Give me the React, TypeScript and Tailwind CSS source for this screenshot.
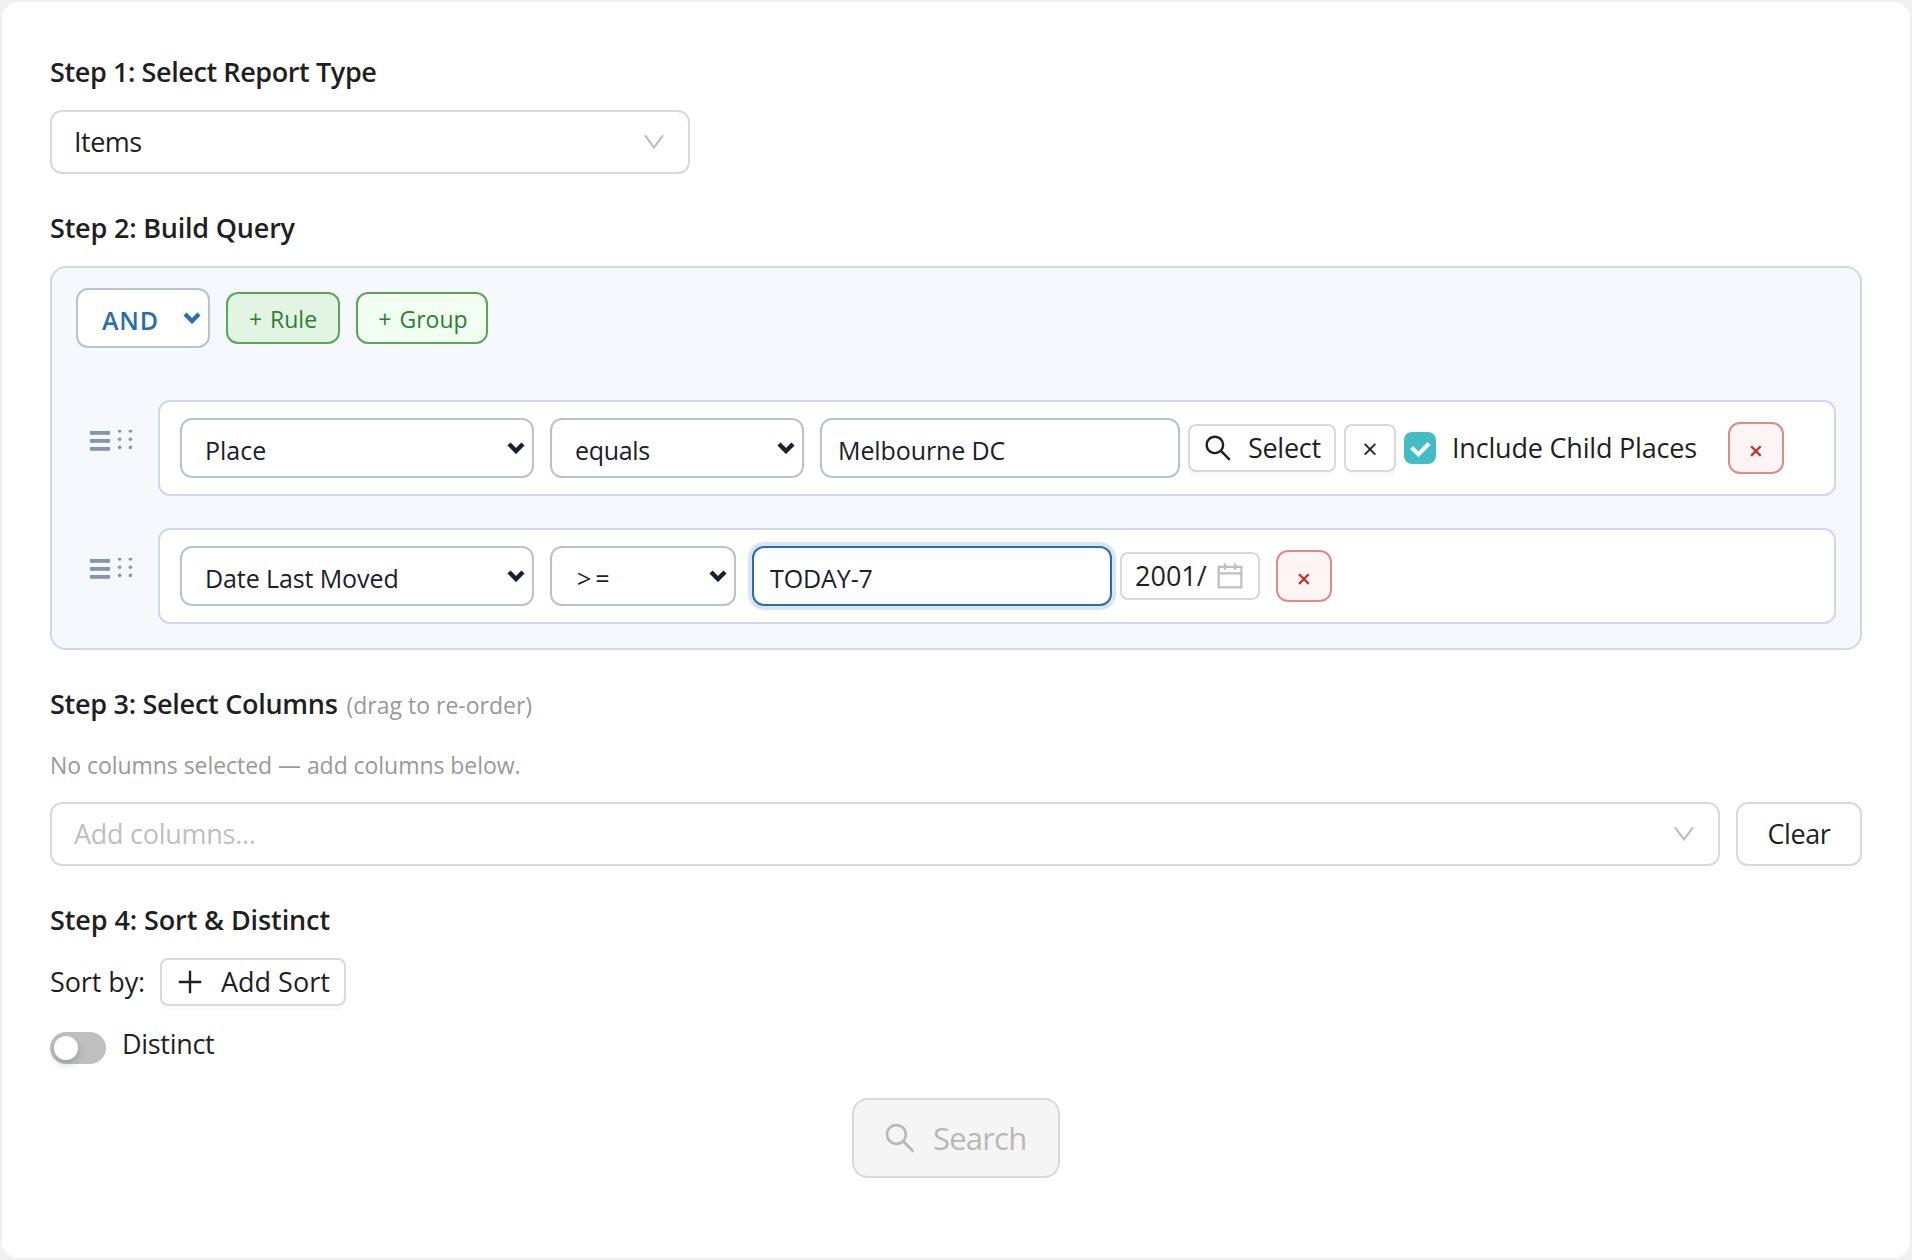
import type { ReactNode } from 'react';
import { AiOutlineCalendar, AiOutlineDown, AiOutlinePlus, AiOutlineSearch } from 'react-icons/ai';

const ICON_BOX = '64 64 896 896';

interface ChildrenProps {
  children: ReactNode;
  className?: string;
}

const StepTitle = ({ children, className = '' }: ChildrenProps) => (
  <h2 className={`text-[27px] leading-[44px] font-semibold text-[#1f1f1f] whitespace-nowrap ${className}`}>
    {children}
  </h2>
);

// Native looking select used by the query builder
const QuerySelect = ({ children, className = '' }: ChildrenProps) => (
  <div
    className={`flex h-[60px] shrink-0 items-center justify-between rounded-xl border-2 border-[#b8c2d0] bg-white pt-1.5 pr-[7px] pl-[23px] text-[25px] whitespace-nowrap ${className}`}
  >
    {children}
    <svg width="18" height="12" viewBox="0 0 18 12" fill="none" className="-mt-1.5">
      <path d="M2 2l7 7 7-7" stroke="currentColor" strokeWidth="4.4" />
    </svg>
  </div>
);

const QueryInput = ({ children, className = '' }: ChildrenProps) => (
  <div
    className={`flex h-[60px] w-[360px] shrink-0 items-center rounded-xl border-2 bg-white pt-1.5 pl-4 text-[25px] tracking-[-0.1px] text-[#1a202c] whitespace-nowrap ${className}`}
  >
    {children}
  </div>
);

const SmallButton = ({ children, className = '' }: ChildrenProps) => (
  <button
    className={`flex h-12 shrink-0 items-center rounded-lg border-2 border-[#d9d9d9] bg-white text-[27px] text-[#1f1f1f] whitespace-nowrap shadow-[0_4px_0_rgba(0,0,0,0.02)] ${className}`}
  >
    {children}
  </button>
);

const RemoveButton = ({ className = '' }: { className?: string }) => (
  <button
    className={`flex h-[52px] w-14 shrink-0 items-center justify-center rounded-xl border-2 border-[#dc8a8a] bg-[#fff5f5] text-[25px] font-semibold text-[#c53030] ${className}`}
  >
    <span className="mt-1.5">×</span>
  </button>
);

const DragHandle = () => (
  <svg width="44" height="22" viewBox="0 0 44 22" className="mt-[30px] mr-6 ml-[14px] shrink-0 self-start" fill="#8896ab">
    {[1, 9, 17].map((y) => (
      <rect key={y} x="0" y={y} width="20" height="3.8" />
    ))}
    {[1.2, 9.4, 17.6].map((y) => (
      <g key={y}>
        <circle cx="29.6" cy={y - 0.2} r="1.8" />
        <circle cx="40.4" cy={y - 0.2} r="1.8" />
      </g>
    ))}
  </svg>
);

const RuleRow = ({ children }: ChildrenProps) => (
  <div className="flex">
    <DragHandle />
    <div className="flex h-24 flex-1 items-center rounded-xl border-2 border-[#d0d7e5] bg-white pl-5 text-[#1a202c]">
      {children}
    </div>
  </div>
);

const App = () => {
  return (
    <div className="h-[1260px] w-[1912px] bg-[#f0f0f0] p-0.5 font-['Open_Sans','Noto_Sans',sans-serif] text-[#1f1f1f]">
      <main className="h-full rounded-2xl bg-white p-12">
        <StepTitle className="tracking-[-0.4px]">Step 1: Select Report Type</StepTitle>
        <div className="mt-4 flex h-16 w-[640px] items-center justify-between rounded-xl border-2 border-[#d9d9d9] bg-white px-[22px] text-[27px]">
          <span className="tracking-[-0.5px]">Items</span>
          <AiOutlineDown viewBox={ICON_BOX} size={24} className="text-[#bfbfbf]" />
        </div>

        <StepTitle className="mt-8 tracking-[-0.2px]">Step 2: Build Query</StepTitle>
        <section className="mt-4 h-[384px] rounded-2xl border-2 border-[#d0d7e5] bg-[#f5f8fd] px-6 pt-5">
          <div className="flex items-center gap-4">
            <QuerySelect className="w-[134px] font-semibold text-[#2b6cb0]">
              <span className="ml-px tracking-[0.8px]">AND</span>
            </QuerySelect>
            <button className="flex h-[52px] w-[114px] items-center justify-center rounded-xl border-2 border-[#5fa35a] bg-[#e2f5e2] pt-0.5 text-[23px] [word-spacing:2px] whitespace-nowrap text-[#2f7d38]">
              + Rule
            </button>
            <button className="flex h-[52px] w-[132px] items-center justify-center rounded-xl border-2 border-[#5fa35a] bg-[#f0fff0] pt-0.5 pl-0.5 text-[23px] [word-spacing:2px] whitespace-nowrap text-[#2f7d38]">
              + Group
            </button>
          </div>

          <div className="mt-[52px] flex flex-col gap-8">
            <RuleRow>
              <QuerySelect className="mr-4 w-[354px]">
                <span>Place</span>
              </QuerySelect>
              <QuerySelect className="mr-4 w-[254px]">
                <span className="tracking-[-0.3px]">equals</span>
              </QuerySelect>
              <QueryInput className="mr-2 border-[#b8c2d0]">
                <span>Melbourne DC</span>
              </QueryInput>
              <SmallButton className="mr-2 w-[148px] gap-4 pl-[14px]">
                <AiOutlineSearch viewBox={ICON_BOX} size={28} className="shrink-0" />
                <span className="tracking-[-0.3px]">Select</span>
              </SmallButton>
              <SmallButton className="mr-2 w-[52px] justify-center">
                <span className="mt-0.5">×</span>
              </SmallButton>
              <label className="flex items-center gap-4 text-[27px] whitespace-nowrap text-[#1f1f1f]">
                <span className="flex size-8 items-center justify-center rounded-lg bg-[#43bcc6]">
                  <svg width="32" height="32" viewBox="0 0 32 32" fill="none">
                    <path d="M7.5 15.5l7 7 10.5-11" stroke="#fff" strokeWidth="4" />
                  </svg>
                </span>
                <span className="w-[276px] pt-px tracking-[-0.2px]">Include Child Places</span>
              </label>
              <RemoveButton />
            </RuleRow>

            <RuleRow>
              <QuerySelect className="mr-4 w-[354px]">
                <span className="tracking-[-0.1px]">Date Last Moved</span>
              </QuerySelect>
              <QuerySelect className="mr-4 w-[186px]">
                <span className="ml-0.5 tracking-[4px]">&gt;=</span>
              </QuerySelect>
              <QueryInput className="mr-2 border-[#2b6cb0] shadow-[0_0_0_4px_#d9e5f2]">
                <span>TODAY-7</span>
              </QueryInput>
              <div className="flex h-12 w-[140px] shrink-0 items-center justify-between rounded-lg border-2 border-[#d9d9d9] bg-white pr-[14px] pl-[13px] text-[27px] text-[#1f1f1f]">
                <span>2001/</span>
                <AiOutlineCalendar viewBox={ICON_BOX} size={28} className="shrink-0 text-[#bfbfbf]" />
              </div>
              <RemoveButton className="ml-4" />
            </RuleRow>
          </div>
        </section>

        <div className="mt-8 flex items-baseline gap-[9px]">
          <StepTitle className="tracking-[-0.28px]">Step 3: Select Columns</StepTitle>
          <span className="text-[23px] text-[#999]">(drag to re-order)</span>
        </div>
        <p className="mt-[17px] text-[23px] leading-[44px] tracking-[-0.05px] whitespace-nowrap text-[#999]">
          No columns selected — add columns below.
        </p>
        <div className="mt-[15px] flex gap-4">
          <div className="flex h-16 flex-1 items-center justify-between rounded-xl border-2 border-[#d9d9d9] bg-white px-[22px] text-[27px] text-[#bfbfbf]">
            <span className="tracking-[-0.27px]">Add columns...</span>
            <AiOutlineDown viewBox={ICON_BOX} size={24} />
          </div>
          <button className="h-16 w-[126px] rounded-xl border-2 border-[#d9d9d9] bg-white text-[27px] tracking-[-0.4px] shadow-[0_4px_0_rgba(0,0,0,0.02)]">
            Clear
          </button>
        </div>

        <StepTitle className="mt-8 tracking-[-0.1px]">Step 4: Sort &amp; Distinct</StepTitle>
        <div className="mt-4 flex items-center text-[27px] whitespace-nowrap">
          <span className="w-[110px] tracking-[-0.1px]">Sort by:</span>
          <SmallButton className="w-[186px] gap-4 pl-[14px]">
            <AiOutlinePlus viewBox={ICON_BOX} size={28} className="shrink-0" />
            <span className="pl-px">Add Sort</span>
          </SmallButton>
        </div>
        <div className="mt-4 flex gap-4 text-[27px] leading-[44px]">
          <div className="mt-2.5 h-8 w-14 rounded-full bg-[#bfbfbf] p-1">
            <div className="size-6 rounded-full bg-white shadow-[0_4px_8px_rgba(0,35,11,0.2)]" />
          </div>
          <span className="tracking-[-0.3px]">Distinct</span>
        </div>

        <div className="mt-8 flex justify-center">
          <button className="flex h-20 w-[208px] items-center gap-[17px] rounded-2xl border-2 border-[#d9d9d9] bg-[#f5f5f5] pl-[30px] text-[31px] tracking-[-0.8px] text-[#b8b8b8]">
            <AiOutlineSearch viewBox={ICON_BOX} size={32} className="shrink-0" />
            <span>Search</span>
          </button>
        </div>
      </main>
    </div>
  );
};

export default App;
